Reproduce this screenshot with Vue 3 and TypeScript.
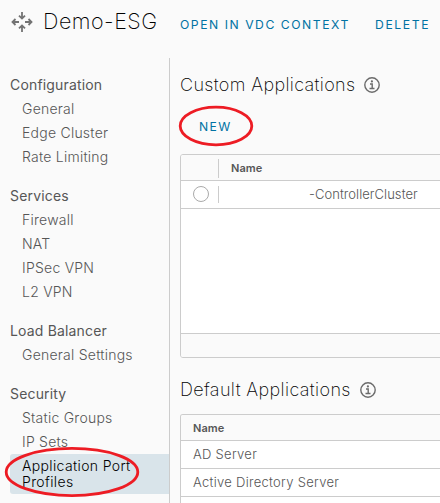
<script setup lang="ts">
interface NavItem { label: string; active?: boolean }
interface NavGroup { title: string; items: NavItem[] }

const groups: NavGroup[] = [
  { title: 'Configuration', items: [{ label: 'General' }, { label: 'Edge Cluster' }, { label: 'Rate Limiting' }] },
  { title: 'Services', items: [{ label: 'Firewall' }, { label: 'NAT' }, { label: 'IPSec VPN' }, { label: 'L2 VPN' }] },
  { title: 'Load Balancer', items: [{ label: 'General Settings' }] },
  { title: 'Security', items: [{ label: 'Static Groups' }, { label: 'IP Sets' }, { label: 'Application Port Profiles', active: true }] },
]
const defaults: string[] = ['AD Server', 'Active Directory Server', '']
</script>

<template>
  <div class="page">
    <header class="top">
      <svg class="gateway" viewBox="0 0 22 22" width="22" height="22">
        <path d="M11 1v6M8 4.6l3 3 3-3M11 21v-6M8 17.4l3-3 3 3M8 11H1.5M4.5 8l-3 3 3 3M14 11h6.5M17.5 8l3 3-3 3" />
      </svg>
      <h1>Demo-ESG</h1>
      <a class="action open">OPEN IN VDC CONTEXT</a>
      <a class="action delete">DELETE</a>
    </header>
    <div class="body">
      <nav>
        <section v-for="g in groups" :key="g.title">
          <h3>{{ g.title }}</h3>
          <a v-for="i in g.items" :key="i.label" :class="{ active: i.active }">{{ i.label }}</a>
        </section>
        <svg class="mark mark-nav" width="136" height="52" viewBox="0 0 136 52">
          <ellipse cx="68" cy="26" rx="65.8" ry="23.6" />
        </svg>
      </nav>
      <main>
        <h2><span>Custom Applications</span>
          <svg class="info" viewBox="0 0 16 16" width="16" height="16">
            <circle cx="8" cy="8" r="7.2" /><path d="M6 7h2.2v4.5M5.5 11.5h5" /><circle class="dot" cx="7.9" cy="4.4" r="1.1" />
          </svg>
        </h2>
        <div class="toolbar">
          <a class="action">NEW</a>
          <svg class="mark mark-new" width="76" height="42" viewBox="0 0 76 42">
            <ellipse cx="38" cy="21" rx="35.8" ry="18.8" />
          </svg>
        </div>
        <div class="grid custom">
          <div class="row head"><span class="select"></span><span class="name">Name</span></div>
          <div class="row"><span class="select"><i class="radio"></i></span><span class="cluster">-ControllerCluster</span></div>
          <div class="blank"></div>
          <div class="foot"></div>
        </div>
        <h2 class="second"><span>Default Applications</span>
          <svg class="info" viewBox="0 0 16 16" width="16" height="16">
            <circle cx="8" cy="8" r="7.2" /><path d="M6 7h2.2v4.5M5.5 11.5h5" /><circle class="dot" cx="7.9" cy="4.4" r="1.1" />
          </svg>
        </h2>
        <div class="grid default">
          <div class="row head"><span class="name">Name</span></div>
          <div v-for="d in defaults" :key="d" class="row"><span class="name">{{ d }}</span></div>
        </div>
      </main>
    </div>
  </div>
</template>

<style>
body { background: #fafafa; }
</style>

<style scoped>
* { box-sizing: border-box; }
.page { width: 440px; height: 503px; overflow: hidden; background: #fafafa; color: #565656; font-family: Inter, "Liberation Sans", sans-serif; }
h1, h2, h3 { margin: 0; }
.top { display: flex; align-items: center; height: 58px; padding: 0 0 14px 11px; white-space: nowrap; }
.gateway { flex: none; fill: none; stroke: #737373; stroke-width: 1.8; }
h1 { width: 137px; margin-left: 10px; margin-top: -2px; font-size: 21.5px; font-weight: 250; line-height: 28px; letter-spacing: 0.5px; color: #000; }
.action { font-size: 12.2px; font-weight: 400; letter-spacing: 1.4px; line-height: 16px; color: #0072a3; }
.top .action { margin-top: 5px; }
.top .open { width: 195px; letter-spacing: 1.53px; }
.top .delete { letter-spacing: 1.6px; }
.body { display: flex; height: 445px; }
nav { position: relative; flex: none; width: 170px; padding: 15px 0 0 10px; border-right: 1px solid #ccc; }
section { margin-bottom: 15px; }
h3 { font-size: 14px; font-weight: 400; line-height: 24px; letter-spacing: 0.17px; color: #565656; }
nav a { display: block; padding: 0 28px 0 12px; font-size: 14px; font-weight: 300; line-height: 24px; letter-spacing: 0.24px; }
nav a.active { height: 40px; padding-top: 4px; line-height: 16px; letter-spacing: 0.36px; border-radius: 3px 0 0 3px; background: #d9e4ea; color: #000; }
main { flex: 1; min-width: 0; padding: 15px 0 0 10px; }
h2 { display: flex; align-items: center; gap: 9px; height: 24px; font-size: 18px; font-weight: 250; letter-spacing: 0.36px; line-height: 24px; white-space: nowrap; color: #000; }
.info { flex: none; fill: none; stroke: #6b6b6b; stroke-width: 1.4; }
.info .dot { fill: #6b6b6b; stroke: none; }
.toolbar { position: relative; height: 57px; padding: 22px 0 0 19px; }
.toolbar .action { display: block; }
.grid { margin-right: -5px; border: 1px solid #ccc; border-radius: 3px; background: #fff; overflow: hidden; }
.row { display: flex; align-items: center; height: 28px; border-bottom: 1px solid #ccc; font-size: 13px; font-weight: 300; letter-spacing: 0.28px; }
.head { height: 26px; background: #fafafa; font-size: 11px; font-weight: 600; letter-spacing: 0.03px; }
.select { display: flex; align-items: center; width: 38px; height: 17px; padding-left: 12px; border-right: 1px solid #ccc; }
.head .select { height: 19px; margin-top: 1px; }
.radio { width: 16px; height: 16px; margin-top: -1px; border: 1px solid #aaa; border-radius: 50%; }
.name { padding-left: 12px; }
.row:not(.head) .name, .cluster { padding-bottom: 2px; }
.cluster { padding-left: 90px; letter-spacing: 0.05px; }
.blank { height: 124px; }
.foot { height: 24px; border-top: 1px solid #ccc; background: #fafafa; }
.second { margin-top: 20px; letter-spacing: 0.38px; }
.default { margin-top: 12px; border-bottom: 0; }
.mark { position: absolute; fill: none; stroke: #ed1c24; stroke-width: 2.8; }
.mark-nav { left: 4px; top: 388px; }
.mark-new { left: -2px; top: 8px; }
</style>
